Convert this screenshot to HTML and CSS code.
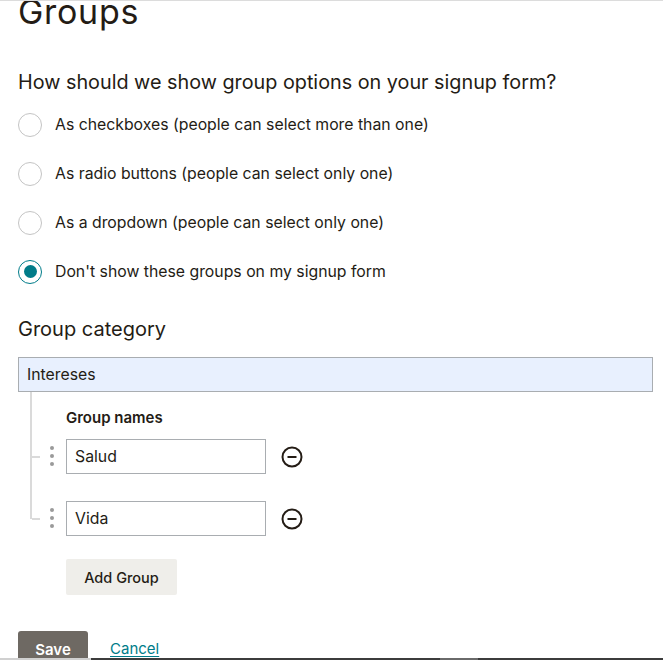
FILE: index.html
```html
<!DOCTYPE html>
<html lang="en">
<head>
<meta charset="utf-8">
<title>Groups</title>
<link rel="stylesheet" href="styles.css">
</head>
<body>
<div class="page">
  <h1 class="title">Groups</h1>
  <p class="question">How should we show group options on your signup form?</p>
  <div class="options">
    <label class="option"><span class="radio"></span><span>As checkboxes (people can select more than one)</span></label>
    <label class="option"><span class="radio"></span><span>As radio buttons (people can select only one)</span></label>
    <label class="option"><span class="radio"></span><span>As a dropdown (people can select only one)</span></label>
    <label class="option"><span class="radio checked"></span><span>Don't show these groups on my signup form</span></label>
  </div>
  <h2 class="section">Group category</h2>
  <div class="category">Intereses</div>
  <div class="tree">
    <div class="tree-label">Group names</div>
    <div class="row">
      <span class="grip"><i></i><i></i><i></i></span>
      <div class="field">Salud</div>
      <svg class="remove" width="22" height="22" viewBox="0 0 22 22"><circle cx="11" cy="11" r="9.5" fill="none" stroke="#241c15" stroke-width="2"/><line x1="6.5" y1="11" x2="15.5" y2="11" stroke="#241c15" stroke-width="2"/></svg>
    </div>
    <div class="row">
      <span class="grip"><i></i><i></i><i></i></span>
      <div class="field">Vida</div>
      <svg class="remove" width="22" height="22" viewBox="0 0 22 22"><circle cx="11" cy="11" r="9.5" fill="none" stroke="#241c15" stroke-width="2"/><line x1="6.5" y1="11" x2="15.5" y2="11" stroke="#241c15" stroke-width="2"/></svg>
    </div>
  </div>
  <div class="add-wrap"><button class="add">Add Group</button></div>
  <div class="actions">
    <button class="save">Save</button>
    <a class="cancel" href="#">Cancel</a>
  </div>
</div>
<div class="bottom-bar"><span class="seg-light"></span><span class="seg-dark"></span><span class="seg-mid"></span><span class="seg-dark2"></span></div>
</body>
</html>
```
FILE: styles.css
```css
html, body {
  height: 100%;
  overflow: hidden;
}
body {
  margin: 0;
  font-family: Inter, "Liberation Sans", sans-serif;
  color: #241c15;
  background: #fff;
  border-top: 1px solid #dcdcdc;
  box-sizing: border-box;
}
.page {
  padding: 0 10px 0 18px;
}
.title {
  font-size: 34px;
  font-weight: 400;
  line-height: 34px;
  margin: -6px 0 0;
  letter-spacing: 0.7px;
}
.question {
  font-size: 19.8px;
  line-height: 24px;
  margin: 41px 0 0;
}
.options {
  margin-top: 6px;
  display: flex;
  flex-direction: column;
}
.option {
  display: flex;
  align-items: center;
  gap: 13px;
  height: 49px;
  font-size: 15.8px;
}
.radio {
  width: 24px;
  height: 24px;
  border: 1px solid #c4c4c4;
  border-radius: 50%;
  box-sizing: border-box;
  display: flex;
  align-items: center;
  justify-content: center;
  flex: none;
}
.radio.checked {
  border: 1.5px solid #007c89;
}
.radio.checked::after {
  content: "";
  width: 13px;
  height: 13px;
  border-radius: 50%;
  background: #007c89;
}
.section {
  font-size: 20px;
  font-weight: 400;
  line-height: 24px;
  margin: 21px 0 0;
}
.category {
  margin-top: 16px;
  height: 35px;
  box-sizing: border-box;
  border: 1px solid #a9adb1;
  background: #e8f0fe;
  padding: 0 8px;
  font-size: 15.8px;
  display: flex;
  align-items: center;
}
.tree {
  margin-left: 12px;
  padding-left: 36px;
  position: relative;
}
.tree::before {
  content: "";
  position: absolute;
  left: 0;
  top: 0;
  bottom: 17px;
  width: 2px;
  background: #dadada;
}
.tree-label {
  font-size: 15px;
  font-weight: 600;
  padding-top: 17px;
  line-height: 18px;
  padding-bottom: 12px;
}
.row {
  display: flex;
  align-items: center;
  height: 35px;
  position: relative;
}
.row + .row { margin-top: 27px; }
.row::before {
  content: "";
  position: absolute;
  left: -34px;
  top: 17px;
  width: 8px;
  height: 2px;
  background: #dadada;
}
.grip {
  position: absolute;
  left: -16px;
  top: 7px;
  display: flex;
  flex-direction: column;
  gap: 4px;
}
.grip i {
  width: 4px;
  height: 4px;
  border-radius: 50%;
  background: #9a9a9a;
}
.field {
  width: 200px;
  height: 35px;
  box-sizing: border-box;
  border: 1px solid #a9adb1;
  padding: 0 8px;
  font-size: 15.8px;
  display: flex;
  align-items: center;
}
.remove {
  margin-left: 15px;
}
.add-wrap {
  padding-left: 48px;
  margin-top: 23px;
}
.add {
  width: 111px;
  height: 36px;
  border: 0;
  border-radius: 2px;
  background: #efeeea;
  color: #241c15;
  font-family: inherit;
  font-size: 14.5px;
  font-weight: 500;
}
.actions {
  margin-top: 36px;
  display: flex;
  align-items: flex-start;
  gap: 22px;
}
.save {
  width: 70px;
  height: 40px;
  border: 0;
  border-radius: 3px;
  background: #6e6963;
  color: #fff;
  font-family: inherit;
  font-size: 15px;
  font-weight: 600;
  padding: 9px 0 0;
  display: flex;
  justify-content: center;
  align-items: flex-start;
}
.cancel {
  color: #007c89;
  font-size: 15px;
  padding-top: 8px;
  text-decoration: underline;
  text-underline-offset: 2px;
}
.bottom-bar {
  position: fixed;
  left: 0;
  right: 0;
  bottom: 0;
  height: 2px;
  display: flex;
}
.seg-light { width: 91px; background: #d0d0d0; }
.seg-dark { width: 349px; background: #3c3c3c; }
.seg-mid { width: 38px; background: #6a6a6a; }
.seg-dark2 { flex: 1; background: #3c3c3c; }
```
